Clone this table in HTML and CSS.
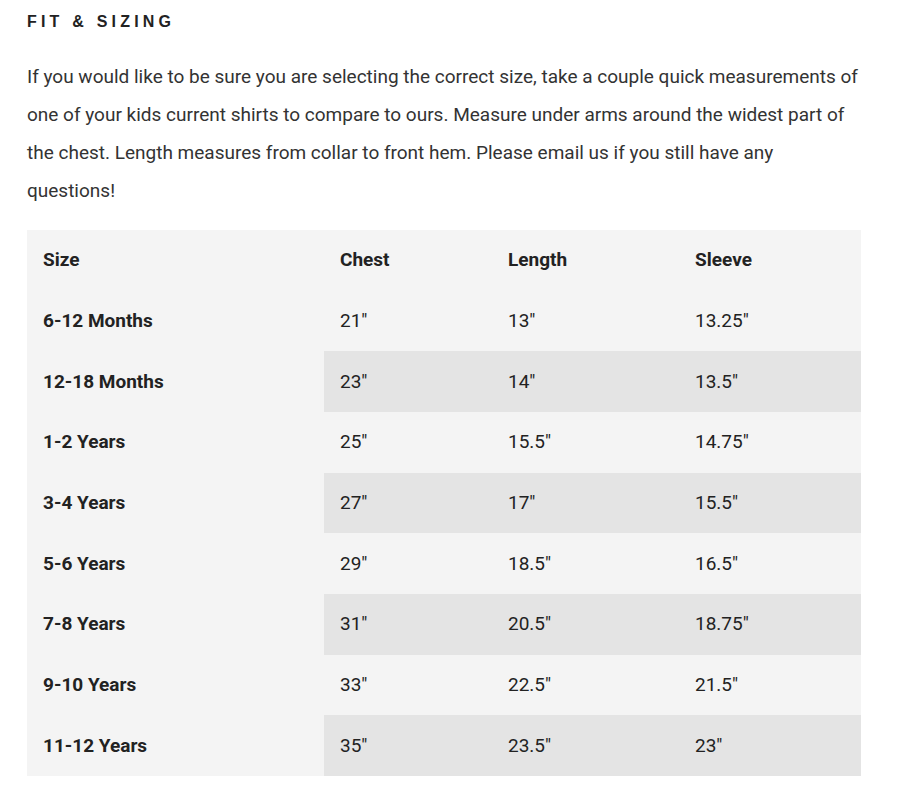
FILE: index.html
```html
<!DOCTYPE html>
<html lang="en">
<head>
<meta charset="utf-8">
<title>Fit &amp; Sizing</title>
<link rel="stylesheet" href="styles.css">
</head>
<body>
<section class="sizing">
  <h2 class="sizing__title">FIT &amp; SIZING</h2>
  <p class="sizing__text">If you would like to be sure you are selecting the correct size, take a couple quick measurements of one of your kids current shirts to compare to ours. Measure under arms around the widest part of the chest. Length measures from collar to front hem. Please email us if you still have any questions!</p>
  <table class="chart">
    <colgroup>
      <col class="chart__c1"><col class="chart__c2"><col class="chart__c3"><col class="chart__c4">
    </colgroup>
    <thead>
      <tr><th>Size</th><th>Chest</th><th>Length</th><th>Sleeve</th></tr>
    </thead>
    <tbody>
      <tr><th>6-12 Months</th><td>21"</td><td>13"</td><td>13.25"</td></tr>
      <tr><th>12-18 Months</th><td>23"</td><td>14"</td><td>13.5"</td></tr>
      <tr><th>1-2 Years</th><td>25"</td><td>15.5"</td><td>14.75"</td></tr>
      <tr><th>3-4 Years</th><td>27"</td><td>17"</td><td>15.5"</td></tr>
      <tr><th>5-6 Years</th><td>29"</td><td>18.5"</td><td>16.5"</td></tr>
      <tr><th>7-8 Years</th><td>31"</td><td>20.5"</td><td>18.75"</td></tr>
      <tr><th>9-10 Years</th><td>33"</td><td>22.5"</td><td>21.5"</td></tr>
      <tr><th>11-12 Years</th><td>35"</td><td>23.5"</td><td>23"</td></tr>
    </tbody>
  </table>
</section>
</body>
</html>
```

FILE: styles.css
```css
html, body {
  margin: 0;
  padding: 0;
  background: #fff;
}

.sizing {
  width: 834px;
  padding: 12px 0 0 27px;
  font-family: Roboto, "Liberation Sans", sans-serif;
}

.sizing__title {
  margin: 0;
  font-family: "Liberation Sans", Arial, sans-serif;
  font-size: 16px;
  line-height: 20px;
  font-weight: 700;
  letter-spacing: 4.2px;
  color: #222;
}

.sizing__text {
  margin: 26px 0 20px;
  font-size: 19px;
  line-height: 38px;
  color: #333;
}

.chart {
  width: 834px;
  border-collapse: collapse;
  border-spacing: 0;
  table-layout: fixed;
  background: #f4f4f4;
  font-size: 19px;
  color: #222;
}

.chart__c1 { width: 297px; }
.chart__c2 { width: 168px; }
.chart__c3 { width: 187px; }
.chart__c4 { width: 182px; }

.chart th,
.chart td {
  height: 60.67px;
  padding: 0 16px;
  box-sizing: border-box;
  text-align: left;
  vertical-align: middle;
  line-height: 24px;
}

.chart th {
  font-weight: 700;
}

.chart td {
  font-weight: 400;
}

.chart tbody tr:nth-child(even) td {
  background: #e4e4e4;
}
```
